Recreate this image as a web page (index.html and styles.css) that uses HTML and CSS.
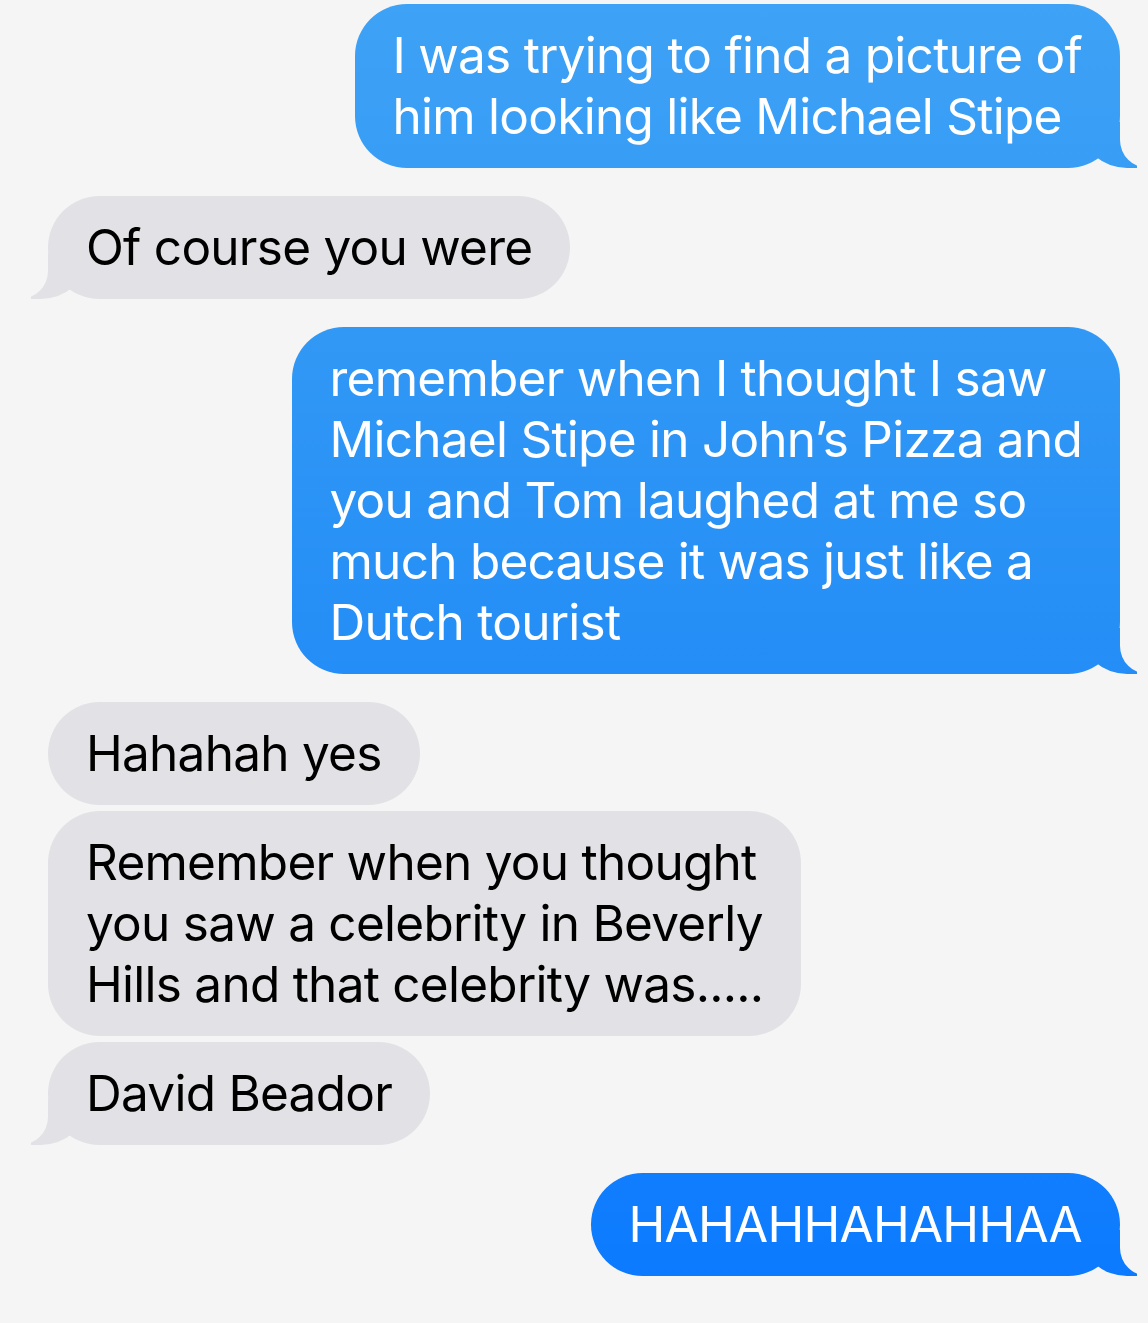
FILE: index.html
```html
<!DOCTYPE html>
<html lang="en">
<head>
    <meta charset="UTF-8">
    <meta name="viewport" content="width=device-width, initial-scale=1.0">
    <title>Messages</title>
    <link rel="stylesheet" href="styles.css">
</head>
<body>
    <div class="thread">
        <div class="msg sent tail">I was trying to find a picture of<br>him looking like Michael Stipe</div>
        <div class="msg received tail">Of course you were</div>
        <div class="msg sent tail">remember when I thought I saw<br>Michael Stipe in John’s Pizza and<br>you and Tom laughed at me so<br>much because it was just like a<br>Dutch tourist</div>
        <div class="msg received">Hahahah yes</div>
        <div class="msg received cont">Remember when you thought<br>you saw a celebrity in Beverly<br>Hills and that celebrity was.....</div>
        <div class="msg received cont tail">David Beador</div>
        <div class="msg sent tail">HAHAHHAHAHHAA</div>
    </div>
</body>
</html>
```

FILE: styles.css
```css
:root {
    --page-background: #f5f5f5;
    --received-background: #e2e2e6;
    --sent-gradient: linear-gradient(to bottom, #3ea2f5 0%, #2790f6 45%, #0a79ff 100%);
}

body {
    margin: 0;
    background-color: var(--page-background);
    font-family: Inter, "Noto Sans", sans-serif;
}

.thread {
    display: flex;
    flex-direction: column;
    padding: 4px 28px 40px 48px;
}

.msg {
    position: relative;
    max-width: max-content;
    margin-top: 28px;
    padding: 21px 38px;
    border-radius: 52px;
    font-size: 49.5px;
    line-height: 61px;
    letter-spacing: -0.015em;
}

.msg:first-child {
    margin-top: 0;
}

.msg.cont {
    margin-top: 6px;
}

.sent {
    align-self: flex-end;
    color: #fff;
    background: var(--sent-gradient);
    background-attachment: fixed;
}

.received {
    align-self: flex-start;
    color: #000;
    background-color: var(--received-background);
}

/* bubble tails */
.tail::before, .tail::after {
    content: "";
    position: absolute;
    bottom: 0;
    height: 46px;
}

.sent.tail::before {
    right: -17px;
    width: 54px;
    background: var(--sent-gradient);
    background-attachment: fixed;
    border-bottom-left-radius: 44px 38px;
}

.sent.tail::after {
    right: -68px;
    width: 68px;
    background-color: var(--page-background);
    border-bottom-left-radius: 28px;
}

.received.tail::before {
    left: -17px;
    width: 54px;
    background-color: var(--received-background);
    border-bottom-right-radius: 44px 38px;
}

.received.tail::after {
    left: -68px;
    width: 68px;
    background-color: var(--page-background);
    border-bottom-right-radius: 28px;
}
```
